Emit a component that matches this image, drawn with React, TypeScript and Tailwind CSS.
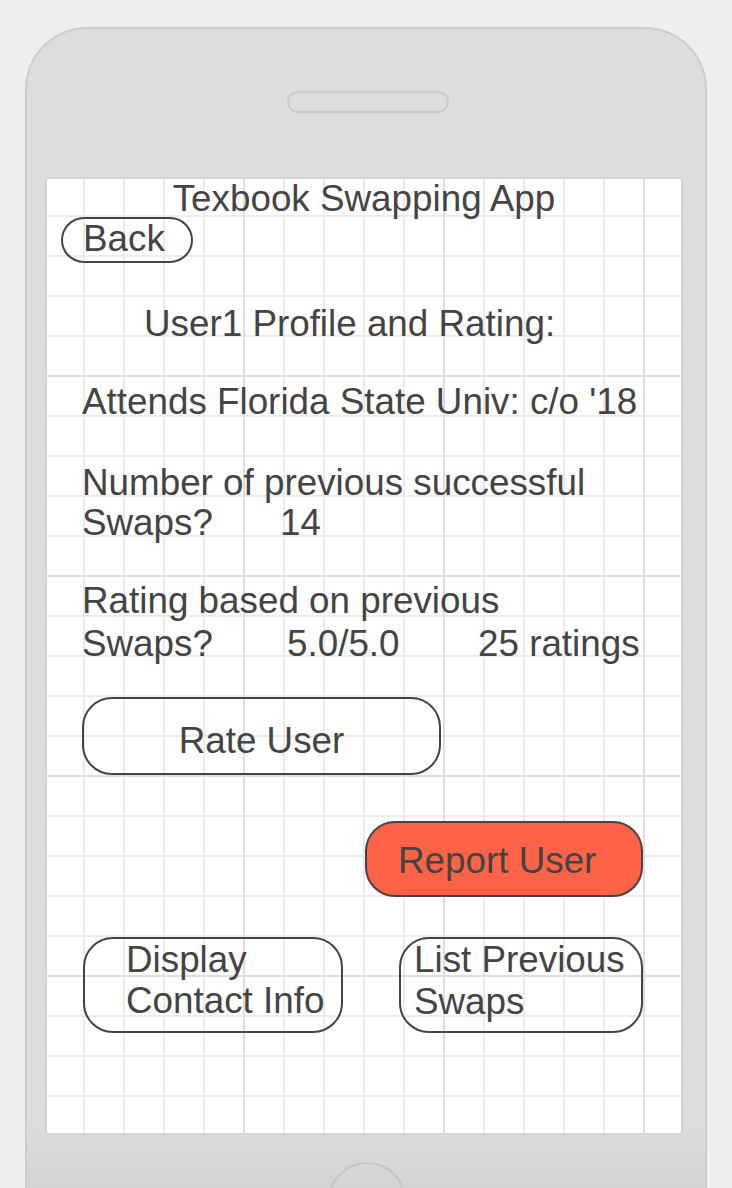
export default function App() {
  return (
    <div className="h-[1188px] w-[732px] overflow-hidden bg-[#eeeeee] pt-[27px] pl-[25px] font-['Liberation_Sans',Arial,sans-serif] text-[#444444]">
      {/* phone body */}
      <div className="flex h-[1240px] w-[682px] flex-col items-start rounded-t-[62px] border-2 border-b-0 border-[#cccccc] bg-[linear-gradient(to_bottom,#dddddd_88%,#cccccc_98%)]">
        <div className="ml-[260px] mt-[62px] h-[22px] w-[162px] shrink-0 rounded-full border-2 border-[#cccccc]" />

        {/* screen */}
        <div className="ml-[18px] mt-[64px] flex h-[958px] w-[638px] shrink-0 flex-col border-2 border-[#d4d4d4] bg-white text-[36.8px] [background-image:linear-gradient(to_right,#dedede_2px,transparent_2px),linear-gradient(to_bottom,#dedede_2px,transparent_2px),linear-gradient(to_right,#ebebeb_2px,transparent_2px),linear-gradient(to_bottom,#ebebeb_2px,transparent_2px)] [background-size:200px_200px,200px_200px,40px_40px,40px_40px] [background-position:196px_196px,196px_196px,36px_36px,36px_36px]">
          <div className="text-center leading-[39px]">Texbook Swapping App</div>

          <button className="mt-[-1px] ml-[14px] flex h-[46px] w-[132px] items-center rounded-full border-2 border-[#444444] pl-[20px] pb-[3px] leading-[38px]">
            Back
          </button>

          <div className="mt-[40px] pl-[97px] leading-[41px]">User1 Profile and Rating:</div>

          <div className="mt-[37px] pl-[35px] leading-[41px]">Attends Florida State Univ: c/o '18</div>

          <div className="mt-[41px] pl-[35px] leading-[40px]">
            <div>Number of previous successful</div>
            <div className="flex">
              <span className="w-[198px]">Swaps?</span>
              <span>14</span>
            </div>
          </div>

          <div className="mt-[36px] pl-[35px] leading-[43px]">
            <div>Rating based on previous</div>
            <div className="flex">
              <span className="w-[205px]">Swaps?</span>
              <span className="w-[191px]">5.0/5.0</span>
              <span>25 ratings</span>
            </div>
          </div>

          <button className="mt-[32px] ml-[35px] h-[78px] w-[359px] rounded-[30px] border-2 border-[#444444] pt-[8px] leading-[41px]">
            Rate User
          </button>

          <button className="mt-[46px] ml-[318px] flex h-[76px] w-[278px] items-center rounded-[30px] border-2 border-[#444444] bg-[#ff6347] pl-[31px] pt-[2px] leading-[41px]">
            Report User
          </button>

          <div className="mt-[40px] flex">
            <button className="ml-[36px] flex h-[96px] w-[260px] flex-col items-start justify-start rounded-[30px] border-2 border-[#444444] pl-[41px] text-left leading-[41px]">
              <span>Display</span>
              <span>Contact Info</span>
            </button>
            <button className="ml-[56px] flex h-[96px] w-[244px] flex-col items-start justify-start rounded-[30px] border-2 border-[#444444] pl-[13px] text-left leading-[42px]">
              <span>List Previous</span>
              <span>Swaps</span>
            </button>
          </div>
        </div>

        <div className="ml-[301px] mt-[27px] h-[78px] w-[78px] shrink-0 rounded-full border-2 border-[#c4c4c4]" />
      </div>
    </div>
  );
}
